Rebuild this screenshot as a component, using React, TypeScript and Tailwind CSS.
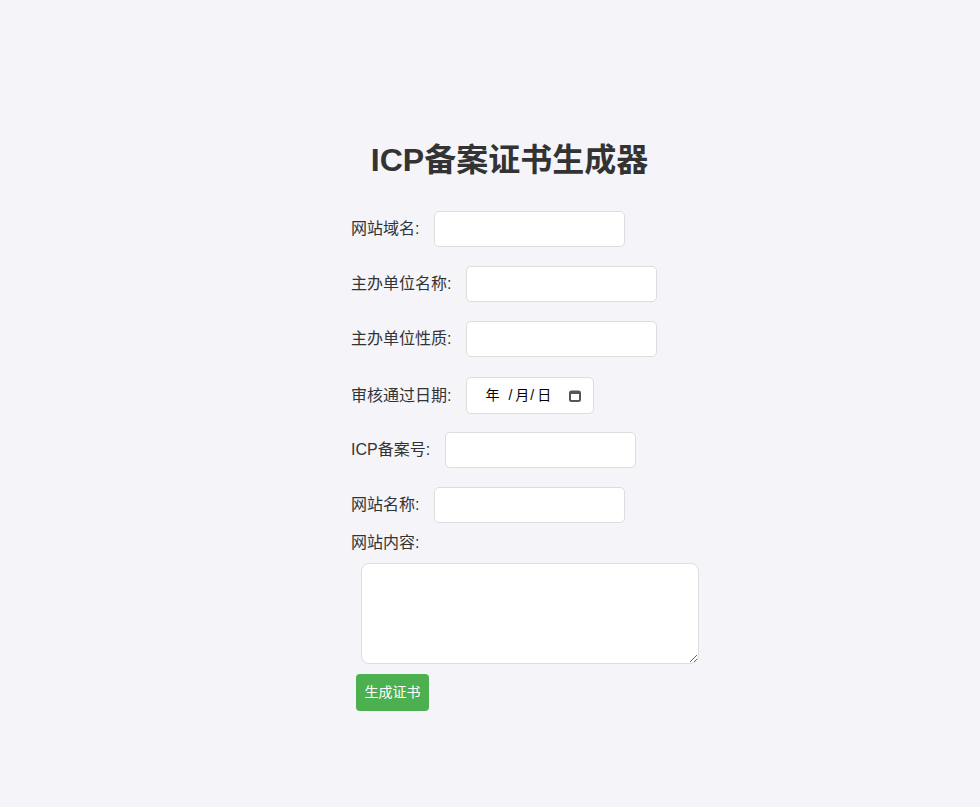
import { useState } from "react";

const fields = [
  { id: "domain", label: "网站域名:" },
  { id: "owner", label: "主办单位名称:" },
  { id: "ownerType", label: "主办单位性质:" },
];

const fieldsAfter = [
  { id: "icp", label: "ICP备案号:" },
  { id: "siteName", label: "网站名称:" },
];

function CalendarIcon() {
  return (
    <svg width="12" height="12" viewBox="0 0 12 12" className="shrink-0">
      <rect x="1" y="1.5" width="10" height="9.5" rx="1.5" fill="none" stroke="#555" strokeWidth="2" />
      <rect x="1" y="1.5" width="10" height="2.5" fill="#555" />
    </svg>
  );
}

export default function App() {
  const [values, setValues] = useState<Record<string, string>>({});

  const row = (f: { id: string; label: string }, mb: string) => (
    <div key={f.id} className={`flex items-center gap-[15px] ${mb}`}>
      <label htmlFor={f.id} className="text-[16px] leading-6 text-[#333]">
        {f.label}
      </label>
      <input
        id={f.id}
        value={values[f.id] ?? ""}
        onChange={(e) => setValues({ ...values, [f.id]: e.target.value })}
        className="h-[36px] w-[191px] rounded-[5px] border border-[#ddd] bg-white px-[10px] text-[14px] outline-none"
      />
    </div>
  );

  return (
    <div
      className="min-h-[807px] bg-[#f4f4f9] pt-[142px] pl-[39px] flex justify-center"
      style={{ fontFamily: '"Liberation Sans", Arial, "Noto Sans CJK SC", sans-serif' }}
    >
      <div className="w-[317px]">
        <h1 className="text-center text-[32px] font-bold leading-[37px] text-[#333] mb-[32px]">
          ICP备案证书生成器
        </h1>

        {row(fields[0], "mb-[19px]")}
        {row(fields[1], "mb-[19px]")}
        {row(fields[2], "mb-[20px]")}

        <div className="flex items-center gap-[15px] mb-[18px]">
          <label className="text-[16px] leading-6 text-[#333]">审核通过日期:</label>
          <div className="flex h-[37px] w-[128px] items-center rounded-[5px] border border-[#ddd] bg-white pl-[18px] pr-[12px] text-[14px] text-black">
            <span className="flex flex-1 items-center">
              <span>年</span>
              <span className="ml-[9px]">/</span>
              <span className="ml-[3px]">月</span>
              <span className="ml-[1px]">/</span>
              <span className="ml-[3px]">日</span>
            </span>
            <CalendarIcon />
          </div>
        </div>

        {row(fieldsAfter[0], "mb-[19px]")}
        {row(fieldsAfter[1], "")}

        <label htmlFor="content" className="mt-[8px] block text-[16px] leading-6 text-[#333]">
          网站内容:
        </label>
        <textarea
          id="content"
          className="mt-[8px] ml-[10px] block h-[101px] w-[338px] rounded-[8px] border border-[#ddd] bg-white p-[10px] text-[14px] outline-none"
        />
        <button className="mt-[10px] ml-[5px] h-[37px] w-[73px] rounded-[4px] bg-[#4CAF50] text-[14px] text-white">
          生成证书
        </button>
      </div>
    </div>
  );
}
